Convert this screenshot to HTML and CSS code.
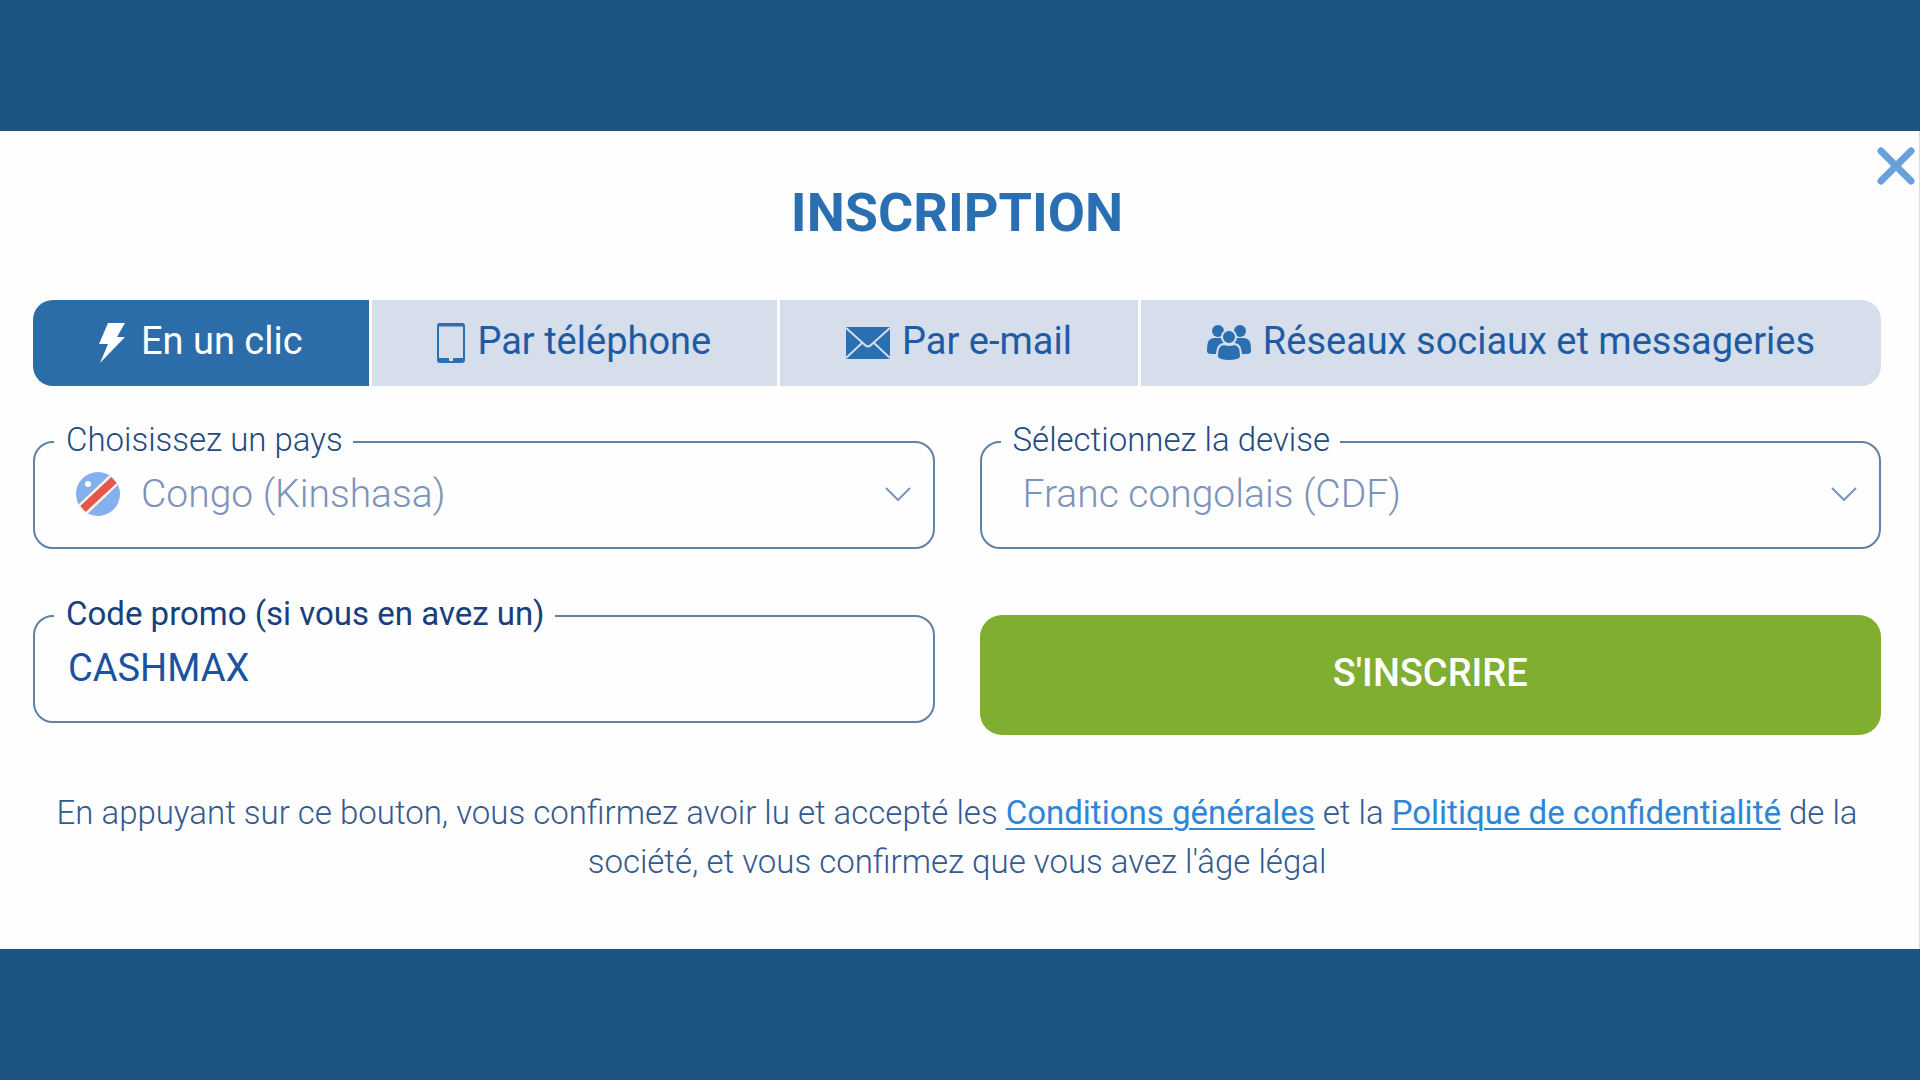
FILE: index.html
```html
<!DOCTYPE html>
<html lang="fr">
<head>
  <meta charset="UTF-8" />
  <meta name="viewport" content="width=device-width, initial-scale=1.0" />
  <title>Inscription</title>
  <link rel="stylesheet" href="styles.css">
</head>
<body>
  <main class="panel">
    <button class="close" type="button" aria-label="Fermer">
      <svg width="38" height="38" viewBox="0 0 38 38" fill="none" stroke="currentColor" stroke-width="7" stroke-linecap="round"><path d="M4 4 34 34M34 4 4 34"/></svg>
    </button>

    <h1>INSCRIPTION</h1>

    <div class="tabs">
      <button class="tab active" type="button">
        <svg width="30" height="42" viewBox="0 0 30 42" fill="currentColor"><path d="M9 1H26L18 15H26L1 41 9 22H0Z"/></svg>
        <span>En un clic</span>
      </button>
      <button class="tab" type="button">
        <svg width="28" height="42" viewBox="0 0 28 42" fill="none" stroke="#2b6fb3"><rect x="1" y="2" width="26" height="38" rx="2" stroke-width="2"/><path d="M1 3H27" stroke-width="3"/><path d="M1 38H12M16 38H27" stroke-width="4"/></svg>
        <span>Par téléphone</span>
      </button>
      <button class="tab" type="button">
        <svg width="44" height="32" viewBox="0 0 44 32"><rect width="44" height="32" fill="#2b6fb3"/><path d="M0 1 19 18Q22 21 25 18L44 1M0 31 16 16M44 31 28 16" fill="none" stroke="#d5deea" stroke-width="2"/></svg>
        <span>Par e-mail</span>
      </button>
      <button class="tab" type="button">
        <svg width="44" height="38" viewBox="0 0 44 38" fill="#2b6fb3" stroke="#d5deea">
          <g stroke="none"><ellipse cx="11" cy="7" rx="6" ry="6"/><ellipse cx="33" cy="7" rx="6" ry="6"/><path d="M0 25Q0 14 7 14H14Q17 15 17 19L13 30H4Q0 30 0 27Z"/><path d="M44 25Q44 14 37 14H30Q27 15 27 19L31 30H40Q44 30 44 27Z"/></g>
          <ellipse cx="22" cy="13" rx="7" ry="7" stroke-width="2"/>
          <path d="M10 32Q10 20 17 20Q22 22 27 20Q34 20 34 32Q34 35 30 36Q22 38 14 36Q10 35 10 32Z" stroke-width="2"/>
        </svg>
        <span>Réseaux sociaux et messageries</span>
      </button>
    </div>

    <form class="form">
      <fieldset class="field">
        <legend><label for="country">Choisissez un pays</label></legend>
        <div class="control with-flag">
          <svg class="flag" width="44" height="44" viewBox="0 0 44 44">
            <defs><clipPath id="round"><circle cx="22" cy="22" r="22"/></clipPath></defs>
            <g clip-path="url(#round)">
              <rect width="44" height="44" fill="#85b0ef"/>
              <path d="M2 42 42 4" stroke="#fff4ec" stroke-width="13"/>
              <path d="M7 37 38 8" stroke="#e2594b" stroke-width="8"/>
              <circle cx="12" cy="12" r="3" fill="#fff"/>
            </g>
          </svg>
          <select id="country">
            <option>Congo (Kinshasa)</option>
          </select>
          <svg class="chevron" width="26" height="14" viewBox="0 0 26 14" fill="none" stroke="currentColor" stroke-width="2"><path d="M1 1 13 13 25 1"/></svg>
        </div>
      </fieldset>

      <fieldset class="field">
        <legend><label for="currency">Sélectionnez la devise</label></legend>
        <div class="control">
          <select id="currency">
            <option>Franc congolais (CDF)</option>
          </select>
          <svg class="chevron" width="26" height="14" viewBox="0 0 26 14" fill="none" stroke="currentColor" stroke-width="2"><path d="M1 1 13 13 25 1"/></svg>
        </div>
      </fieldset>

      <fieldset class="field promo">
        <legend><label for="promo">Code promo (si vous en avez un)</label></legend>
        <div class="control">
          <input type="text" id="promo" value="CASHMAX" />
        </div>
      </fieldset>

      <button class="submit" type="submit">S'INSCRIRE</button>
    </form>

    <p class="terms">En appuyant sur ce bouton, vous confirmez avoir lu et accepté les <a href="#">Conditions générales</a> et la <a href="#">Politique de confidentialité</a> de la société, et vous confirmez que vous avez l'âge légal</p>
  </main>
</body>
</html>
```
FILE: styles.css
```css
* {
  box-sizing: border-box;
}
body {
  margin: 0;
  min-height: 100vh;
  display: flex;
  flex-direction: column;
  justify-content: center;
  background: #1e5482;
  font-family: Roboto, "Liberation Sans", sans-serif;
}
button, input, select {
  font-family: inherit;
}
svg {
  flex: none;
}
.panel {
  position: relative;
  padding: 52px 38px 63px 33px;
  background: #fefefe;
  border-right: 1px solid #d9dde2;
}
.close {
  position: absolute;
  top: 16px;
  right: 4px;
  padding: 0;
  border: none;
  background: none;
  color: #68a0dc;
  line-height: 0;
  cursor: pointer;
}
h1 {
  margin: 0 0 57px;
  text-align: center;
  font-size: 54px;
  line-height: 60px;
  font-weight: 700;
  color: #2b6fb3;
}

.tabs {
  display: flex;
  gap: 3px;
  border-radius: 20px;
  overflow: hidden;
}
.tab {
  flex: 1 1 auto;
  display: flex;
  align-items: center;
  justify-content: center;
  gap: 12px;
  height: 86px;
  padding: 0;
  border: none;
  background: #d5deea;
  color: #1e5ba3;
  font-size: 38px;
  line-height: 44px;
  cursor: pointer;
}
.tab span {
  padding-bottom: 4px;
}
.tab.active {
  background: #2b6da9;
  color: #fff;
}

.form {
  display: grid;
  grid-template-columns: 1fr 1fr;
  align-items: start;
  gap: 48px 45px;
  margin-top: 37px;
}
.field {
  min-width: 0;
  margin: 0;
  padding: 0 0 20px;
  border: 2px solid #5f82a8;
  border-radius: 20px;
}
.field legend {
  margin-left: 19px;
  padding: 0 10px 4px 12px;
  font-size: 33px;
  line-height: 34px;
  font-weight: 300;
  color: #234a80;
}
.field.promo legend {
  font-weight: 400;
  color: #17407c;
}
.control {
  position: relative;
  display: flex;
  align-items: center;
  height: 66px;
  color: #7c93bb;
}
.control select, .control input {
  flex: 1;
  width: 100%;
  height: 64px;
  padding: 0 60px 0 41px;
  border: none;
  outline: none;
  background: none;
  appearance: none;
  color: inherit;
  font-size: 39px;
  font-weight: 300;
}
.control input {
  padding: 0 33px;
  color: #1a52a0;
  font-size: 38px;
  font-weight: 400;
}
.flag {
  margin-left: 41px;
}
.control.with-flag select {
  padding-left: 21px;
}
.chevron {
  position: absolute;
  top: 26px;
  right: 22px;
  pointer-events: none;
}

.submit {
  height: 120px;
  margin-top: 18px;
  padding: 0 0 4px;
  border: none;
  border-radius: 22px;
  background: #80ae30;
  color: #fff;
  font-size: 38px;
  font-weight: 500;
  cursor: pointer;
}

.terms {
  margin: 53px 0 0;
  text-align: center;
  font-size: 33px;
  line-height: 49px;
  font-weight: 300;
  color: #33598f;
}
.terms a {
  color: #2e86d8;
  font-weight: 400;
  text-decoration-thickness: 2px;
  text-underline-offset: 4px;
}
```
